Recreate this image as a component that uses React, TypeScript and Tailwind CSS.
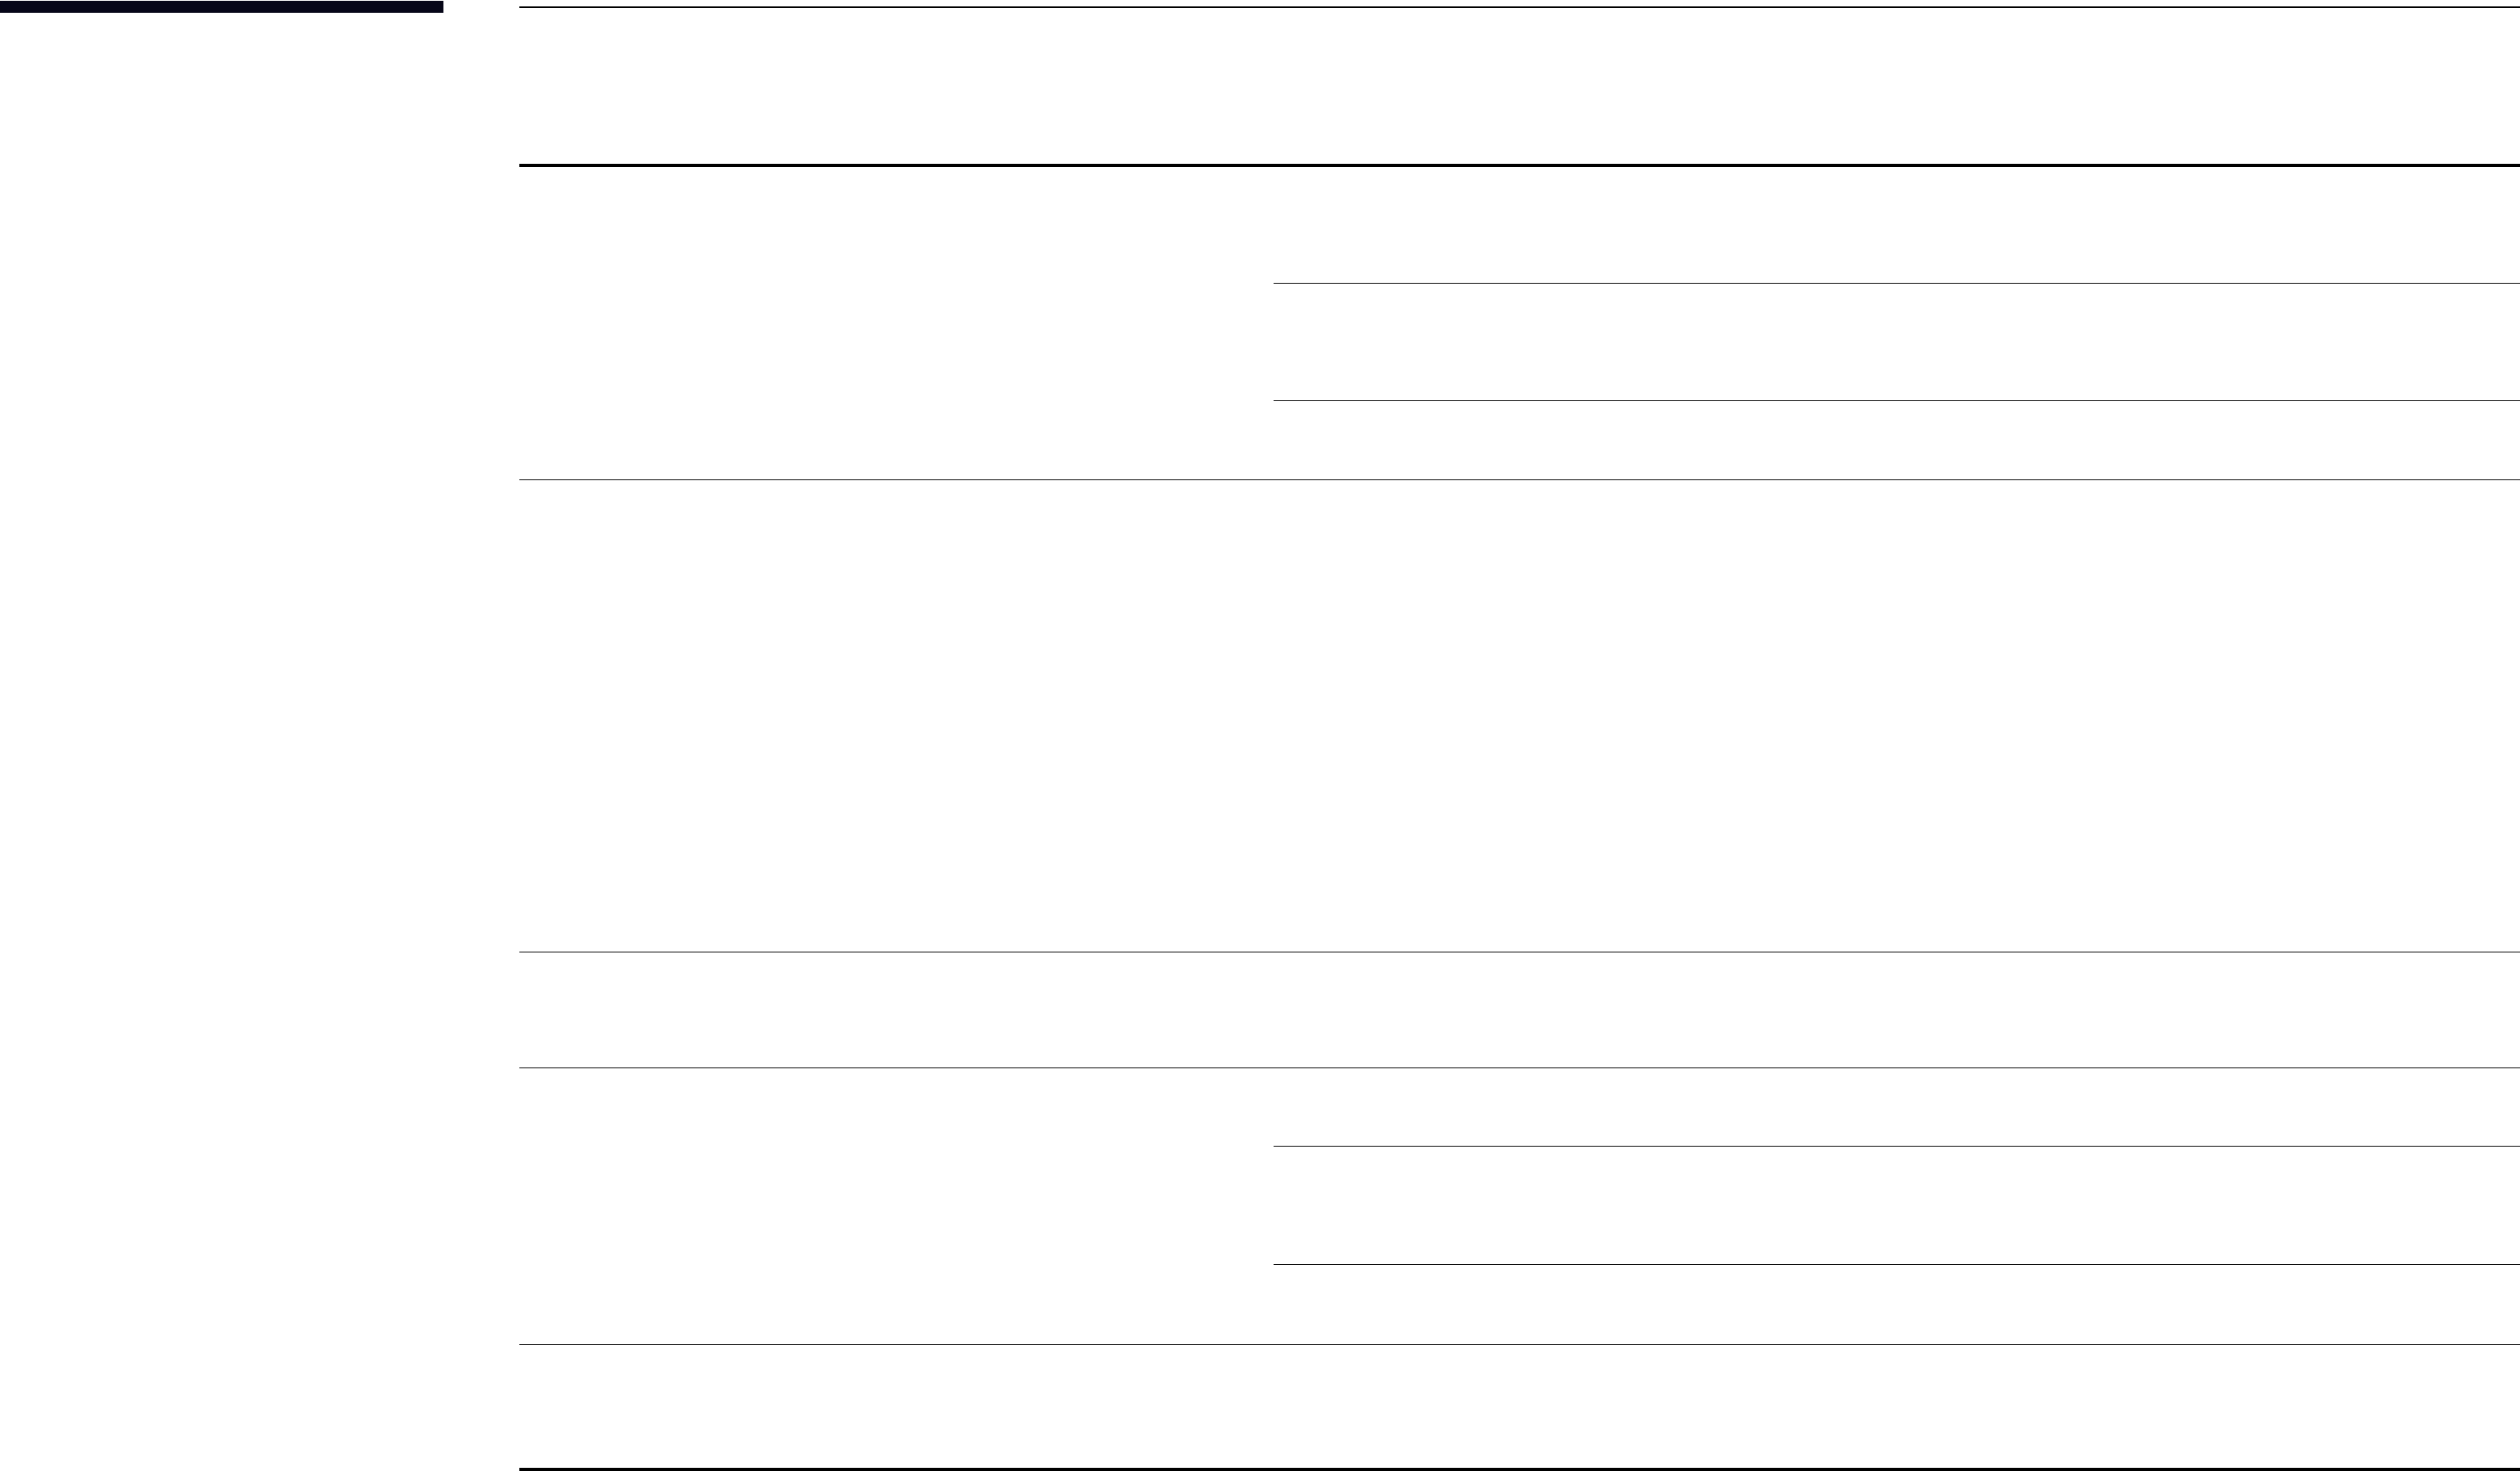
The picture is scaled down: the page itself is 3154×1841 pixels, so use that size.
import React from 'react';

type SubRows = number[];

interface RowSpec {
  height: number;
  subRows?: SubRows;
}

const rows: RowSpec[] = [
  { height: 392, subRows: [146, 147, 98] },
  { height: 591 },
  { height: 145 },
  { height: 346, subRows: [98, 148, 99] },
  { height: 154 },
];

const TableRow: React.FC<{ row: RowSpec; last: boolean }> = ({ row, last }) => (
  <div
    className={`flex ${last ? '' : 'border-b border-black'}`}
    style={{ height: row.height }}
  >
    <div className="w-[944px] shrink-0" />
    <div className="flex-1 flex flex-col">
      {row.subRows?.map((h, i) => (
        <div
          key={i}
          className={i < row.subRows!.length - 1 ? 'border-b border-black' : ''}
          style={{ height: h }}
        />
      ))}
    </div>
  </div>
);

export default function App() {
  return (
    <div className="min-h-screen w-full bg-white flex font-['Liberation_Sans',sans-serif] overflow-hidden">
      {/* Sidebar */}
      <aside className="w-[555px] shrink-0 pt-px">
        <div className="h-[15px] bg-[#060618]" />
      </aside>

      {/* Main table */}
      <main className="ml-[95px] flex-1 pt-2">
        <div className="border-t-2 border-black">
          <div className="h-[199px] border-b-4 border-black" />
          {rows.map((row, i) => (
            <TableRow key={i} row={row} last={i === rows.length - 1} />
          ))}
          <div className="border-b-4 border-black" />
        </div>
      </main>
    </div>
  );
}
